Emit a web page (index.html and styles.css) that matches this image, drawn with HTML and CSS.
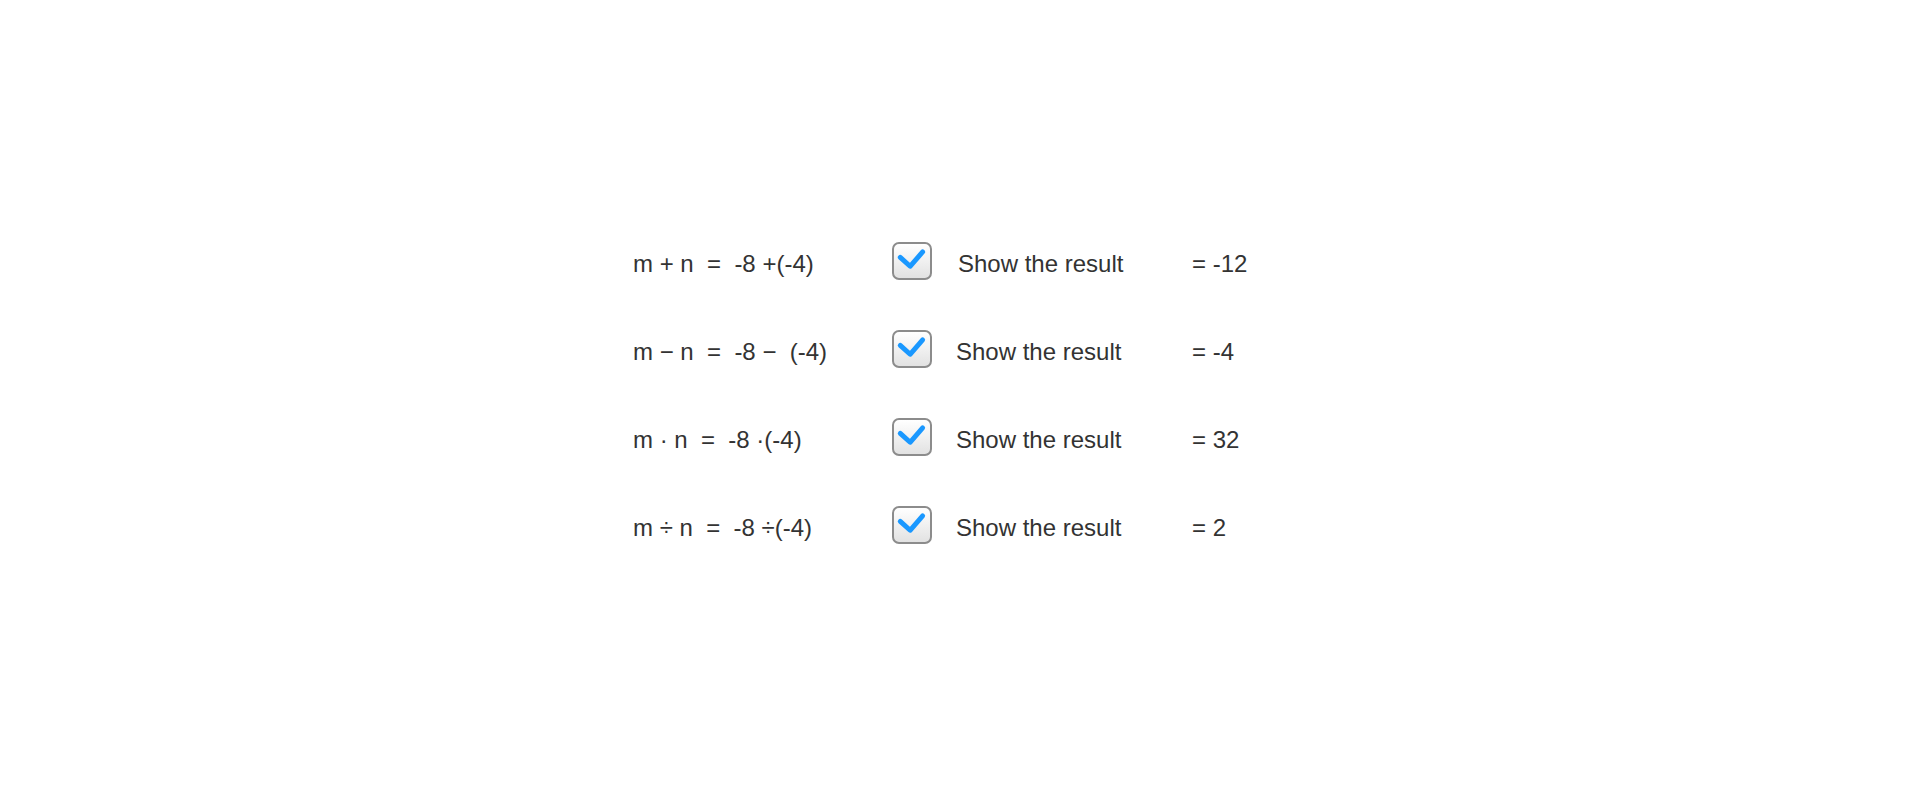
FILE: index.html
```html
<!DOCTYPE html>
<html lang="en">
<head>
    <meta charset="UTF-8">
    <meta name="viewport" content="width=device-width, initial-scale=1.0">
    <title>Operations with integers</title>
    <link rel="stylesheet" href="styles.css">
</head>
<body>
    <div class="sheet">
        <div class="row">
            <span class="formula">m + n  =  -8 +(-4)</span>
            <span class="check"><svg viewBox="0 0 40 38"><polyline points="8,16 19,26 33,10"/></svg></span>
            <span class="label first">Show the result</span>
            <span class="result">= -12</span>
        </div>
        <div class="row">
            <span class="formula">m − n  =  -8 −  (-4)</span>
            <span class="check"><svg viewBox="0 0 40 38"><polyline points="8,16 19,26 33,10"/></svg></span>
            <span class="label">Show the result</span>
            <span class="result">= -4</span>
        </div>
        <div class="row">
            <span class="formula">m · n  =  -8 ·(-4)</span>
            <span class="check"><svg viewBox="0 0 40 38"><polyline points="8,16 19,26 33,10"/></svg></span>
            <span class="label">Show the result</span>
            <span class="result">= 32</span>
        </div>
        <div class="row">
            <span class="formula">m ÷ n  =  -8 ÷(-4)</span>
            <span class="check"><svg viewBox="0 0 40 38"><polyline points="8,16 19,26 33,10"/></svg></span>
            <span class="label">Show the result</span>
            <span class="result">= 2</span>
        </div>
    </div>
</body>
</html>
```

FILE: styles.css
```css
body {
    margin: 0;
    background: #ffffff;
    font-family: "Liberation Sans", Arial, sans-serif;
    font-size: 24px;
    color: #333333;
}

.sheet {
    display: flex;
    flex-direction: column;
    gap: 50px;
    padding: 242px 0 0 633px;
}

.row {
    display: grid;
    grid-template-columns: 259px 40px 260px auto;
    align-items: center;
    height: 38px;
}

.formula,
.label,
.result {
    padding-top: 6px;
}

.formula {
    white-space: pre;
}

.check {
    box-sizing: border-box;
    width: 40px;
    height: 38px;
    border: 2px solid #8c8c8c;
    border-radius: 7px;
    background: linear-gradient(#ffffff, #e2e2e2);
}

.check svg {
    display: block;
    width: 36px;
    height: 34px;
    margin: -1px 0 0 -1px;
}

.check polyline {
    fill: none;
    stroke: #1a98ff;
    stroke-width: 5.5;
    stroke-linecap: round;
    stroke-linejoin: round;
}

.label {
    padding-left: 24px;
}

.label.first {
    padding-left: 26px;
}
```
